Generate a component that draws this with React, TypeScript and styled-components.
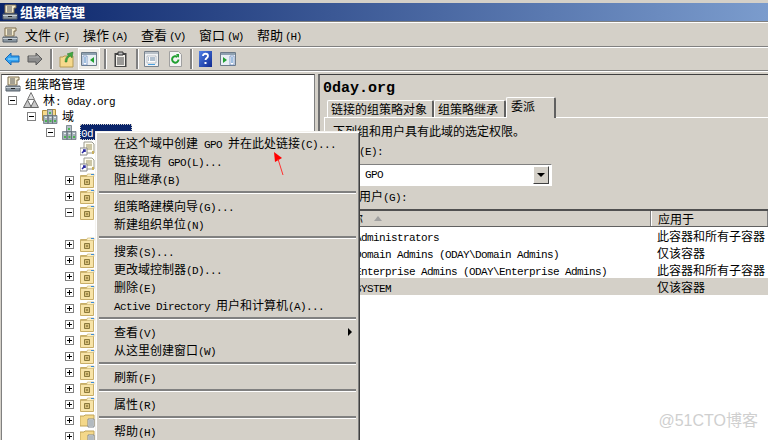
import React from 'react';
import styled, { createGlobalStyle } from 'styled-components';

const cjk = '"Noto Sans CJK SC", "Liberation Sans", sans-serif';
const face = '#d4d0c8';

const GlobalStyle = createGlobalStyle`
  html, body { margin: 0; padding: 0; background: ${face}; overflow: hidden; }
  body { font-family: ${cjk}; font-size: 12px; color: #000; }
  * { box-sizing: border-box; }
`;

const Page = styled.div`
  position: relative;
  width: 768px;
  height: 440px;
  overflow: hidden;
  background: ${face};
  padding-top: 3px;
  display: flex;
  flex-direction: column;
`;

const TitleBar = styled.div`
  height: 18px;
  flex: none;
  display: flex;
  align-items: center;
  gap: 2px;
  padding-left: 2px;
  background: linear-gradient(90deg, #0a246a 0%, #7b9ccd 100%);
  color: #fff;
  font-size: 13px;
  font-weight: 700;
  line-height: 18px;
`;

const MenuBar = styled.div`
  height: 26px;
  flex: none;
  display: flex;
  align-items: center;
  padding: 1px 0 0 2px;
  border-top: 1px solid #808080;
  box-shadow: inset 0 1px 0 #fff;
  border-bottom: 1px solid #808080;
`;

const MenuTitle = styled.span`
  width: 58px;
  flex: none;
  font-size: 13px;
  white-space: nowrap;
  &:first-of-type { margin-left: 7px; }
`;

const Mnemonic = styled.span`
  font-family: "Liberation Mono", monospace;
  font-size: 11px;
  letter-spacing: -1.2px;
  margin-left: 2px;
`;

const ToolBar = styled.div`
  height: 24px;
  flex: none;
  display: flex;
  align-items: center;
  padding-left: 4px;
  border-top: 1px solid #fff;
  border-bottom: 1px solid #808080;
`;

const Tool = styled.div<{ $gap?: number; $on?: boolean }>`
  flex: none;
  display: flex;
  align-items: center;
  justify-content: center;
  margin-left: ${p => p.$gap ?? 0}px;
  ${p => p.$on && `
    width: 22px;
    height: 22px;
    border: 1px solid #fff;
    background-color: #eeece8;
    background-image: radial-gradient(#bbb 0.5px, transparent 0.6px);
    background-size: 2px 2px;
  `}
`;

const ToolSep = styled.div<{ $gap: number }>`
  width: 2px;
  height: 20px;
  flex: none;
  margin-left: ${p => p.$gap}px;
  background: #808080;
  box-shadow: 1px 0 0 #fff;
`;

const Workspace = styled.div`
  flex: 1;
  min-height: 0;
  display: flex;
  border-top: 1px solid #fff;
  padding-top: 2px;
`;

const TreePane = styled.div`
  width: 314px;
  flex: none;
  margin-left: 1px;
  padding-top: 1px;
  background: #fff;
  border-top: 1px solid #404040;
  border-left: 1px solid #808080;
  border-right: 1px solid #808080;
  overflow: hidden;
`;

const TreeRow = styled.div<{ $indent: number }>`
  height: 16px;
  display: flex;
  align-items: center;
  padding-left: ${p => p.$indent}px;
  white-space: nowrap;
`;

const Expander = styled.span`
  width: 9px;
  height: 9px;
  flex: none;
  position: relative;
  border: 1px solid #808080;
  background: #fff;
  margin-right: 6px;
  &::before {
    content: '';
    position: absolute;
    left: 1px;
    top: 3px;
    width: 5px;
    height: 1px;
    background: #000;
  }
`;

const ExpanderPlus = styled(Expander)`
  &::after {
    content: '';
    position: absolute;
    left: 3px;
    top: 1px;
    width: 1px;
    height: 5px;
    background: #000;
  }
`;

const TreeLabel = styled.span<{ $selected?: boolean }>`
  margin-left: ${p => (p.$selected ? 3 : 4)}px;
  height: 16px;
  line-height: 16px;
  ${p => p.$selected && `
    width: 52px;
    padding-left: 1px;
    color: #fff;
    background: #0a246a;
    outline: 1px dotted #d4d0c8;
    outline-offset: -1px;
  `}
`;

const DetailPane = styled.div`
  flex: 1;
  min-width: 0;
  margin-left: 3px;
  padding-left: 4px;
  border-top: 1px solid #404040;
  border-left: 2px solid #707070;
  display: flex;
  flex-direction: column;
`;

const DomainTitle = styled.div`
  height: 22px;
  flex: none;
  margin-left: -1px;
  padding-top: 6px;
  line-height: 16px;
  font-family: "Liberation Mono", monospace;
  font-weight: 700;
  font-size: 15px;
`;

const Tabs = styled.div`
  height: 20px;
  flex: none;
  display: flex;
  align-items: flex-end;
  padding-left: 3px;
  position: relative;
  z-index: 1;
`;

const Tab = styled.div<{ $w: number; $active?: boolean }>`
  width: ${p => p.$w}px;
  height: ${p => (p.$active ? 21 : 17)}px;
  margin-bottom: ${p => (p.$active ? -1 : 0)}px;
  flex: none;
  padding-left: ${p => (p.$active ? 4 : 3)}px;
  line-height: 16px;
  background: ${face};
  border-top: 1px solid #fff;
  border-left: 1px solid #fff;
  border-right: 2px solid #606060;
  border-radius: 2px 2px 0 0;
  white-space: nowrap;
`;

const TabPanel = styled.div`
  flex: 1;
  min-height: 0;
  border-top: 1px solid #fff;
  border-left: 1px solid #fff;
  padding: 5px 0 0 8px;
  display: flex;
  flex-direction: column;
`;

const Note = styled.div<{ $h: number }>`
  height: ${p => p.$h}px;
  flex: none;
  line-height: 16px;
  white-space: nowrap;
`;

const LabelRow = styled(Note)`
  padding-left: 2px;
  margin-top: -1px;
`;

const Combo = styled.div`
  width: 218px;
  height: 22px;
  flex: none;
  margin: 1px 0 3px 1px;
  padding: 1px 2px 1px 30px;
  background: #fff;
  border: 1px solid #808080;
  border-right-color: #fff;
  border-bottom-color: #fff;
  display: flex;
  align-items: center;
  justify-content: space-between;
`;

const ComboButton = styled.div`
  width: 16px;
  height: 18px;
  flex: none;
  display: flex;
  align-items: center;
  justify-content: center;
  background: ${face};
  border: 1px solid;
  border-color: #fff #404040 #404040 #fff;
  &::after {
    content: '';
    border-left: 4px solid transparent;
    border-right: 4px solid transparent;
    border-top: 4px solid #000;
  }
`;

const PermissionList = styled.div`
  flex: 1;
  min-height: 0;
  margin-left: -8px;
  background: #fff;
  border-top: 2px solid #505050;
`;

const ListHead = styled.div`
  height: 16px;
  display: grid;
  grid-template-columns: 326px 1fr;
  background: ${face};
  border-bottom: 1px solid #606060;
  line-height: 15px;
`;

const HeadCell = styled.div`
  padding-left: 7px;
  display: flex;
  align-items: center;
  border-right: 1px solid #808080;
  box-shadow: 1px 0 0 #fff inset;
`;

const NameHead = styled(HeadCell)`
  padding-left: 14px;
`;

const SortMark = styled.span`
  margin-left: 11px;
  border-left: 4px solid transparent;
  border-right: 4px solid transparent;
  border-bottom: 5px solid #a0a0a0;
`;

const ListRow = styled.div<{ $selected?: boolean }>`
  height: 17px;
  display: grid;
  grid-template-columns: 326px 1fr;
  align-items: center;
  background: ${p => (p.$selected ? face : '#fff')};
  white-space: nowrap;
`;

const NameCell = styled.span`
  padding-left: 30px;
  margin-top: -1px;
`;

const ScopeCell = styled.span`
  padding-left: 6px;
`;

const Mono = styled.span`
  font-family: "Liberation Mono", monospace;
  font-size: 11px;
  letter-spacing: -0.6px;
  white-space: pre;
`;

const ContextMenu = styled.div`
  position: absolute;
  left: 95px;
  top: 131px;
  width: 265px;
  height: 320px;
  padding: 2px 2px;
  background: ${face};
  border: 1px solid;
  border-color: #f4f2ee #404040 #404040 #f4f2ee;
  box-shadow: inset 1px 1px 0 #fff, inset -1px -1px 0 #808080;
`;

const MenuItem = styled.div`
  position: relative;
  height: 18px;
  padding-left: 16px;
  line-height: 18px;
  white-space: nowrap;
`;

const SubArrow = styled.span`
  position: absolute;
  right: 5px;
  top: 5px;
  border-top: 4px solid transparent;
  border-bottom: 4px solid transparent;
  border-left: 4px solid #000;
`;

const MenuSep = styled.div`
  height: 2px;
  margin: 3px 1px 4px;
  background: #808080;
  box-shadow: 0 1px 0 #fff;
`;

const Callout = styled.svg`
  position: absolute;
  left: 268px;
  top: 148px;
`;

const Watermark = styled.div`
  position: absolute;
  right: 10px;
  bottom: 10px;
  color: #cfcfcf;
  font-family: "Liberation Sans", ${cjk};
  font-size: 16px;
  line-height: 18px;
`;

const ScrollIcon = () => (
  <svg width="16" height="16" viewBox="0 0 16 16">
    <path d="M3 1h11v3h-2v5H3z" fill="#f4ecd0" stroke="#7a6a4a" />
    <path d="M5 3h5M5 5h5M5 7h5" stroke="#555" />
    <path d="M1 10h14v5H1z" fill="#8a96a0" stroke="#56606a" />
    <path d="M1 11.5h14" stroke="#c8d0d6" />
    <path d="M6 12.5h4" stroke="#222" />
  </svg>
);

const ForestIcon = () => (
  <svg width="16" height="16" viewBox="0 0 16 16">
    <path d="M8 .5l3.500 7h-7z" fill="#e0e0e0" stroke="#777" />
    <path d="M4.500 8l4 7.500H.5zM11.500 8l4 7.500h-8z" fill="#c8c8c8" stroke="#666" />
  </svg>
);

const ServerStack = () => (
  <g>
    <path d="M5.500 1.500h5v6h-5z" fill="#b4c0c8" stroke="#5f6c74" strokeWidth="0.7" />
    <path d="M1.500 7.500h4.500v8H1.500zM6 7.500h4.500v8H6zM10.500 7.500h4.500v8h-4.500z" fill="#a4b0b8" stroke="#5f6c74" strokeWidth="0.7" />
    <path d="M3 13h2M7.500 13h2M12 13h2M7 5h2" stroke="#2fb52f" strokeWidth="1.4" />
    <path d="M3 9.500h2M7.500 9.500h2M12 9.500h2" stroke="#e8eef0" />
  </g>
);

const DomainsIcon = () => (
  <svg width="16" height="16" viewBox="0 0 16 16">
    <path d="M.5 2.500h4l1-1h8v11H.5z" fill="#f6d98c" stroke="#b08f40" />
    <ServerStack />
  </svg>
);

const DomainIcon = () => (
  <svg width="16" height="16" viewBox="0 0 16 16">
    <ServerStack />
  </svg>
);

const GpoLinkIcon = () => (
  <svg width="15" height="15" viewBox="0 0 15 15">
    <path d="M4 1h8l2 2v9H4z" fill="#fffdf0" stroke="#9a9a90" />
    <path d="M6 4h6M6 6h6M6 8h6" stroke="#9a8f5a" />
    <path d="M12 10h2v3h-2z" fill="#c8b060" />
    <path d="M0 7h7v7H0z" fill="#fff" stroke="#888" />
    <path d="M2 12l3-3M3 9h2v2" stroke="#2a2aa0" strokeWidth="1.5" fill="none" />
  </svg>
);

const OuIcon = () => (
  <svg width="15" height="15" viewBox="0 0 15 15">
    <path d="M.5 2.500h13v12H.5z" fill="#f8e4a8" stroke="#c8ae68" />
    <path d="M.5 3.500h6l1-2.500h6.500v2.500z" fill="#fcf2cc" stroke="#c8ae68" strokeWidth="0.6" />
    <path d="M11 1.500h3" stroke="#3a8ad8" />
    <path d="M4.500 6.500h5v5h-5z" fill="#d8c078" stroke="#8c7a3c" />
    <path d="M6 9h2" stroke="#6c5a24" />
  </svg>
);

const FilterFolderIcon = () => (
  <svg width="15" height="15" viewBox="0 0 15 15">
    <path d="M0 3h4l1-1h9v11H0z" fill="#f4d88a" stroke="#c0a458" />
    <path d="M8 6h6v8H8z" fill="#f4f4f4" stroke="#808890" />
    <path d="M9 8h4M9 10h4M9 12h4" stroke="#70808a" />
  </svg>
);

const NavArrow = ({ back }: { back?: boolean }) => (
  <svg width="16" height="14" viewBox="0 0 16 14">
    <path
      d={back ? 'M1 7l6-6v3h8v6H7v3z' : 'M15 7L9 1v3H1v6h8v3z'}
      fill={back ? '#35a3f0' : '#8c8c8c'}
      stroke={back ? '#1668b8' : '#5a5a5a'}
    />
    <path d={back ? 'M4 7h10' : 'M2 5h10'} stroke={back ? '#a8e0ff' : '#b8b8b8'} />
  </svg>
);

const UpFolderIcon = () => (
  <svg width="15" height="17" viewBox="0 0 15 17">
    <path d="M1 6h3l1-1h9v11H1z" fill="#f6d98c" stroke="#b59a55" />
    <path d="M6 11c0-4 2-6 4-7L8 3l6-2-1 6-1.500-2C9 6 8 8 8 11z" fill="#3fa83f" stroke="#2a7a2a" strokeWidth="0.5" />
  </svg>
);

const TreeToggleIcon = () => (
  <svg width="16" height="14" viewBox="0 0 16 14">
    <path d="M.5.500h15v13H.5z" fill="#e8eef4" stroke="#6c7a88" />
    <path d="M1 1h14v2H1z" fill="#8ea0b0" />
    <path d="M2 4h4v9H2z" fill="#fff" stroke="#5c80b8" strokeWidth="0.7" />
    <path d="M3 6h2M3 8h2M3 10h2" stroke="#4080c0" />
    <path d="M13 5v6L9 8z" fill="#20a030" />
  </svg>
);

const ClipboardIcon = () => (
  <svg width="13" height="17" viewBox="0 0 13 17">
    <path d="M.5 2h12v14H.5z" fill="#444" />
    <path d="M2 4h9v11H2z" fill="#f2f0ea" />
    <path d="M4 1h5v3H4z" fill="#bbb" stroke="#333" />
    <path d="M3 7h7M3 9h7M3 11h7M3 13h7" stroke="#444" />
  </svg>
);

const PropertiesIcon = () => (
  <svg width="15" height="16" viewBox="0 0 15 16">
    <path d="M.5.500h14v15H.5z" fill="#f0f2f4" stroke="#78828c" />
    <path d="M1 1h13v2H1z" fill="#b8c0c8" />
    <path d="M3 5h9v7H3z" fill="#fff" stroke="#98a0a8" strokeWidth="0.6" />
    <path d="M4 7h1M6 7h5M4 9h1M6 9h5" stroke="#6080a0" />
    <path d="M4 13.500h7" stroke="#48a0e0" />
  </svg>
);

const RefreshIcon = () => (
  <svg width="13" height="16" viewBox="0 0 13 16">
    <path d="M.5.500h9l3 3v12H.5z" fill="#f4f4f4" stroke="#a0a0a0" />
    <path d="M9.500 8.500a3.200 3.200 0 1 1-1-2.400" fill="none" stroke="#20a030" strokeWidth="2" />
    <path d="M7 3h3v4z" fill="#20a030" />
  </svg>
);

const HelpIcon = () => (
  <svg width="13" height="16" viewBox="0 0 13 16">
    <defs>
      <linearGradient id="helpFill" x1="0" y1="0" x2="1" y2="1">
        <stop offset="0" stopColor="#4f80e8" />
        <stop offset="1" stopColor="#102a90" />
      </linearGradient>
    </defs>
    <path d="M0 0h13v16H0z" fill="url(#helpFill)" />
    <path d="M4 5c0-3 5-3 5 0 0 2-2.500 2-2.500 4" fill="none" stroke="#fff" strokeWidth="1.800" />
    <path d="M5.500 11h2v2h-2z" fill="#fff" />
  </svg>
);

const ActionPaneIcon = () => (
  <svg width="16" height="14" viewBox="0 0 16 14">
    <path d="M.5.500h15v13H.5z" fill="#e8eef4" stroke="#6c7a88" />
    <path d="M1 1h14v2H1z" fill="#8ea0b0" />
    <path d="M3 5v6l4-3z" fill="#20a030" />
    <path d="M10 4h4v9h-4z" fill="#fff" stroke="#5c80b8" strokeWidth="0.7" />
    <path d="M11 6h2M11 8h2M11 10h2" stroke="#4080c0" />
  </svg>
);

const ouRows: ('plus' | 'minus' | 'blank' | 'filter')[] = [
  'plus', 'plus', 'minus', 'blank',
  'plus', 'plus', 'plus', 'plus', 'plus', 'plus', 'plus', 'plus', 'plus', 'plus', 'plus',
  'filter', 'filter',
];

const grants = [
  { name: 'Administrators', scope: '此容器和所有子容器' },
  { name: 'Domain Admins (ODAY\\Domain Admins)', scope: '仅该容器' },
  { name: 'Enterprise Admins (ODAY\\Enterprise Admins)', scope: '此容器和所有子容器' },
  { name: 'SYSTEM', scope: '仅该容器', selected: true },
];

export default function App() {
  return (
    <Page>
      <GlobalStyle />
      <TitleBar>
        <ScrollIcon />
        组策略管理
      </TitleBar>
      <MenuBar>
        <ScrollIcon />
        <MenuTitle>文件<Mnemonic>(F)</Mnemonic></MenuTitle>
        <MenuTitle>操作<Mnemonic>(A)</Mnemonic></MenuTitle>
        <MenuTitle>查看<Mnemonic>(V)</Mnemonic></MenuTitle>
        <MenuTitle>窗口<Mnemonic>(W)</Mnemonic></MenuTitle>
        <MenuTitle>帮助<Mnemonic>(H)</Mnemonic></MenuTitle>
      </MenuBar>
      <ToolBar>
        <Tool><NavArrow back /></Tool>
        <Tool $gap={7}><NavArrow /></Tool>
        <ToolSep $gap={7} />
        <Tool $gap={7}><UpFolderIcon /></Tool>
        <Tool $gap={4} $on><TreeToggleIcon /></Tool>
        <ToolSep $gap={4} />
        <Tool $gap={8}><ClipboardIcon /></Tool>
        <ToolSep $gap={9} />
        <Tool $gap={6}><PropertiesIcon /></Tool>
        <Tool $gap={10}><RefreshIcon /></Tool>
        <ToolSep $gap={8} />
        <Tool $gap={7}><HelpIcon /></Tool>
        <Tool $gap={8}><ActionPaneIcon /></Tool>
      </ToolBar>
      <Workspace>
        <TreePane>
          <TreeRow $indent={3}><ScrollIcon /><TreeLabel>组策略管理</TreeLabel></TreeRow>
          <TreeRow $indent={6}><Expander /><ForestIcon /><TreeLabel>林<Mono>: 0day.org</Mono></TreeLabel></TreeRow>
          <TreeRow $indent={25}><Expander /><DomainsIcon /><TreeLabel>域</TreeLabel></TreeRow>
          <TreeRow $indent={44}><Expander /><DomainIcon /><TreeLabel $selected><Mono>0d</Mono></TreeLabel></TreeRow>
          <TreeRow $indent={78}><GpoLinkIcon /></TreeRow>
          <TreeRow $indent={78}><GpoLinkIcon /></TreeRow>
          {ouRows.map((kind, i) => {
            if (kind === 'blank') return <TreeRow key={i} $indent={63} />;
            return (
              <TreeRow key={i} $indent={63}>
                {kind === 'minus' ? <Expander /> : <ExpanderPlus />}
                {kind === 'filter' ? <FilterFolderIcon /> : <OuIcon />}
              </TreeRow>
            );
          })}
        </TreePane>
        <DetailPane>
          <DomainTitle>0day.org</DomainTitle>
          <Tabs>
            <Tab $w={107}>链接的组策略对象</Tab>
            <Tab $w={72}>组策略继承</Tab>
            <Tab $w={50} $active>委派</Tab>
          </Tabs>
          <TabPanel>
            <Note $h={20}>下列组和用户具有此域的选定权限。</Note>
            <LabelRow $h={21}>权限<Mono>(E):</Mono></LabelRow>
            <Combo><Mono>GPO</Mono><ComboButton /></Combo>
            <LabelRow $h={21}>组和用户<Mono>(G):</Mono></LabelRow>
            <PermissionList>
              <ListHead>
                <NameHead>名称<SortMark /></NameHead>
                <HeadCell>应用于</HeadCell>
              </ListHead>
              {grants.map(g => (
                <ListRow key={g.name} $selected={g.selected}>
                  <NameCell><Mono>{g.name}</Mono></NameCell>
                  <ScopeCell>{g.scope}</ScopeCell>
                </ListRow>
              ))}
            </PermissionList>
          </TabPanel>
        </DetailPane>
      </Workspace>
      <ContextMenu>
        <MenuItem>在这个域中创建<Mono> GPO </Mono>并在此处链接<Mono>(C)...</Mono></MenuItem>
        <MenuItem>链接现有<Mono> GPO(L)...</Mono></MenuItem>
        <MenuItem>阻止继承<Mono>(B)</Mono></MenuItem>
        <MenuSep />
        <MenuItem>组策略建模向导<Mono>(G)...</Mono></MenuItem>
        <MenuItem>新建组织单位<Mono>(N)</Mono></MenuItem>
        <MenuSep />
        <MenuItem>搜索<Mono>(S)...</Mono></MenuItem>
        <MenuItem>更改域控制器<Mono>(D)...</Mono></MenuItem>
        <MenuItem>删除<Mono>(E)</Mono></MenuItem>
        <MenuItem><Mono>Active Directory </Mono>用户和计算机<Mono>(A)...</Mono></MenuItem>
        <MenuSep />
        <MenuItem>查看<Mono>(V)</Mono><SubArrow /></MenuItem>
        <MenuItem>从这里创建窗口<Mono>(W)</Mono></MenuItem>
        <MenuSep />
        <MenuItem>刷新<Mono>(F)</Mono></MenuItem>
        <MenuSep />
        <MenuItem>属性<Mono>(R)</Mono></MenuItem>
        <MenuSep />
        <MenuItem>帮助<Mono>(H)</Mono></MenuItem>
      </ContextMenu>
      <Callout width="20" height="30" viewBox="0 0 20 30">
        <path d="M6 4l8 6-7 4z" fill="#ff0000" />
        <path d="M10 11l5 16" stroke="#ff3030" strokeWidth="1" />
      </Callout>
      <Watermark>@51CTO博客</Watermark>
    </Page>
  );
}
